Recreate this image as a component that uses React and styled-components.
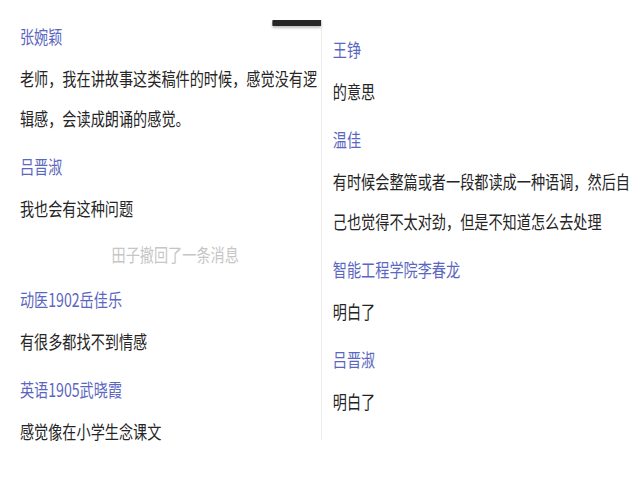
import React from 'react';
import styled, { createGlobalStyle } from 'styled-components';

// the screenshot is squeezed horizontally, so the page is laid out wider and scaled back
const SQUEEZE = 0.765;

const leftMessages = [
  { name: '张婉颖', text: '老师，我在讲故事这类稿件的时候，感觉没有逻辑感，会读成朗诵的感觉。' },
  { name: '吕晋淑', text: '我也会有这种问题' },
  { recall: '田子撤回了一条消息' },
  { name: '动医1902岳佳乐', text: '有很多都找不到情感' },
  { name: '英语1905武晓霞', text: '感觉像在小学生念课文' },
];

const rightMessages = [
  { name: '王铮', text: '的意思' },
  { name: '温佳', text: '有时候会整篇或者一段都读成一种语调，然后自己也觉得不太对劲，但是不知道怎么去处理' },
  { name: '智能工程学院李春龙', text: '明白了' },
  { name: '吕晋淑', text: '明白了' },
];

const App = () => {
  return (
    <>
      <GlobalStyle />
      <Page>
        <LeftCol>
          <BarRow>
            <TopBar />
          </BarRow>
          <MessageList messages={leftMessages} />
        </LeftCol>
        <RightCol>
          <MessageList messages={rightMessages} />
        </RightCol>
      </Page>
    </>
  );
};

const MessageList = ({ messages }) => (
  <List>
    {messages.map((m, i) =>
      m.recall ? (
        <Recall key={i}>{m.recall}</Recall>
      ) : (
        <Message key={i}>
          <Name>{m.name}</Name>
          <Body>{m.text}</Body>
        </Message>
      )
    )}
  </List>
);

export default App;

const GlobalStyle = createGlobalStyle`
  html, body {
    margin: 0;
    padding: 0;
    background: #ffffff;
    overflow: hidden;
  }
  body {
    font-family: "Noto Sans CJK SC", "Noto Sans", sans-serif;
  }
`;

const Page = styled.div`
  display: flex;
  align-items: flex-start;
  width: ${640 / SQUEEZE}px;
  height: 480px;
  padding-top: 20px;
  box-sizing: border-box;
  transform: scaleX(${SQUEEZE});
  transform-origin: 0 0;
`;

const LeftCol = styled.div`
  width: 420px;
  flex-shrink: 0;
  display: flex;
  flex-direction: column;
  padding-left: 26px;
  box-sizing: border-box;
`;

const BarRow = styled.div`
  display: flex;
  justify-content: flex-end;
`;

const TopBar = styled.div`
  width: 64px;
  height: 6px;
  background: #262626;
  border-radius: 1px;
  box-shadow: 0 2px 3px rgba(0, 0, 0, 0.25);
`;

const RightCol = styled.div`
  flex: 1;
  min-height: 420px;
  border-left: 1px solid #e6e6e6;
  padding: 19px 0 0 14px;
  box-sizing: border-box;
`;

const List = styled.div`
  display: flex;
  flex-direction: column;
`;

const Message = styled.div`
  display: flex;
  flex-direction: column;
  margin-bottom: 18px;
`;

const Name = styled.div`
  font-size: 18.5px;
  line-height: 20px;
  color: #5a66c0;
  white-space: nowrap;
`;

const Body = styled.div`
  margin-top: 12px;
  font-size: 18.5px;
  line-height: 40px;
  color: #252525;
`;

const Recall = styled.div`
  margin: -2px 0 25px;
  padding-left: 12px;
  font-size: 18.5px;
  line-height: 20px;
  color: #c6c6c6;
  text-align: center;
`;
